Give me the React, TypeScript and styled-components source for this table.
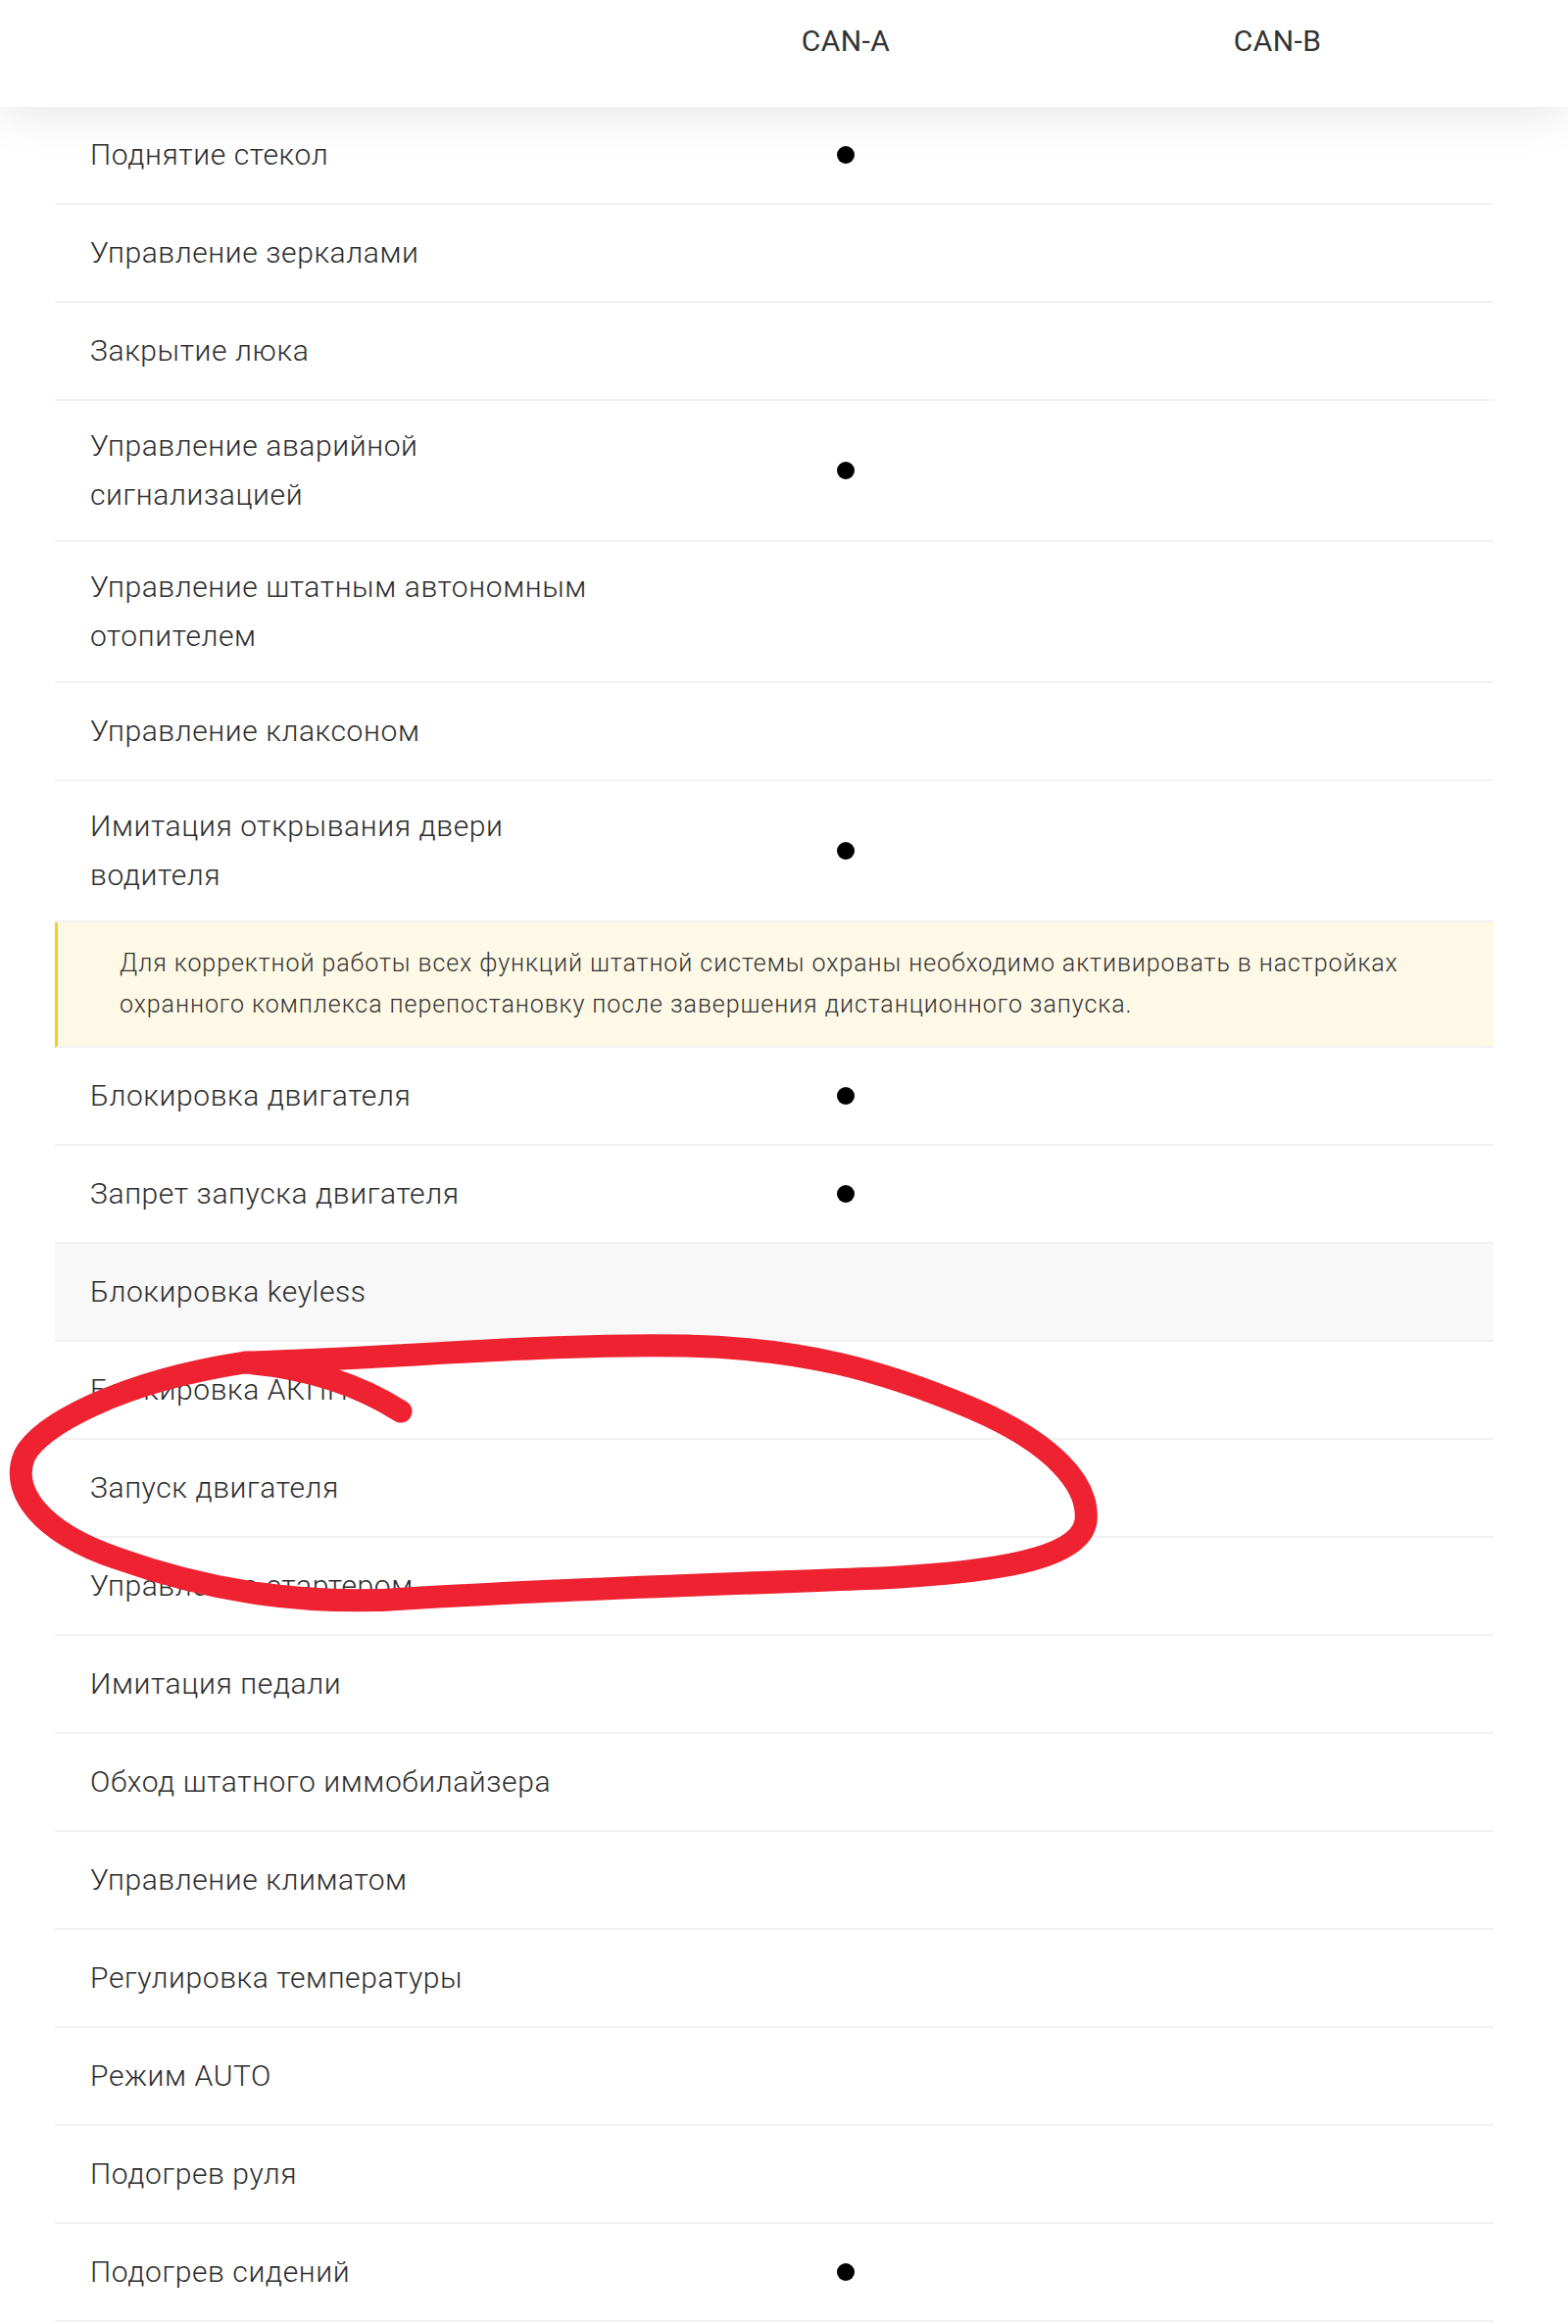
import React from "react";
import styled, { createGlobalStyle } from "styled-components";

const GlobalStyle = createGlobalStyle`
  html, body {
    margin: 0;
    padding: 0;
    background: #ffffff;
  }
  body {
    font-family: Roboto, "Noto Sans", "Liberation Sans", sans-serif;
    color: #363636;
    -webkit-font-smoothing: antialiased;
  }
  *, *::before, *::after { box-sizing: border-box; }
`;

const Page = styled.div`
  position: relative;
  width: 1600px;
  min-height: 2371px;
  overflow: hidden;
  background: #ffffff;
`;

const Header = styled.header`
  position: relative;
  z-index: 2;
  height: 109px;
  background: #ffffff;
  box-shadow: 0 6px 50px rgba(0, 0, 0, 0.1);
  padding: 0 76px 0 56px;
`;

const Grid = styled.div`
  display: grid;
  grid-template-columns: 587px 440px 1fr;
  align-items: center;
`;

const HeaderGrid = styled(Grid)`
  height: 82px;
`;

const ColTitle = styled.div`
  text-align: center;
  font-size: 30px;
  font-weight: 400;
  color: #333333;
  letter-spacing: 0.4px;
`;

const Table = styled.div`
  position: relative;
  z-index: 1;
  padding: 0 76px 0 56px;
`;

const Row = styled(Grid)<{ $shaded?: boolean }>`
  min-height: 100px;
  border-bottom: 2px solid #f1f1f1;
  background: ${(p) => (p.$shaded ? "#f8f8f8" : "transparent")};
`;

const Label = styled.div`
  padding: 21px 0 21px 36px;
  font-size: 30px;
  line-height: 50px;
  font-weight: 300;
  letter-spacing: 0.6px;
  color: #2e2e2e;
`;

const Cell = styled.div`
  display: flex;
  justify-content: center;
  align-items: center;
`;

const Dot = styled.span`
  display: block;
  width: 18px;
  height: 18px;
  border-radius: 50%;
  background: #000000;
`;

const Note = styled.div`
  background: #fef9e6;
  border-left: 3px solid #efce2a;
  border-bottom: 2px solid #f1f1f1;
  padding: 21px 30px 21px 63px;
  font-size: 25px;
  line-height: 42px;
  font-weight: 300;
  letter-spacing: 0.93px;
  color: #333333;
`;

const Scribble = styled.svg`
  position: absolute;
  left: 0;
  top: 0;
  width: 1600px;
  height: 2371px;
  pointer-events: none;
  z-index: 3;
`;

type Item = { label: React.ReactNode; a?: boolean; shaded?: boolean };

const before: Item[] = [
  { label: "Поднятие стекол", a: true },
  { label: "Управление зеркалами" },
  { label: "Закрытие люка" },
  { label: <>Управление аварийной<br />сигнализацией</>, a: true },
  { label: <>Управление штатным автономным<br />отопителем</> },
  { label: "Управление клаксоном" },
  { label: <>Имитация открывания двери<br />водителя</>, a: true },
];

const after: Item[] = [
  { label: "Блокировка двигателя", a: true },
  { label: "Запрет запуска двигателя", a: true },
  { label: "Блокировка keyless", shaded: true },
  { label: "Блокировка АКПП" },
  { label: "Запуск двигателя" },
  { label: "Управление стартером" },
  { label: "Имитация педали" },
  { label: "Обход штатного иммобилайзера" },
  { label: "Управление климатом" },
  { label: "Регулировка температуры" },
  { label: "Режим AUTO" },
  { label: "Подогрев руля" },
  { label: "Подогрев сидений", a: true },
];

const TableRow: React.FC<{ item: Item }> = ({ item }) => (
  <Row $shaded={item.shaded}>
    <Label>{item.label}</Label>
    <Cell>{item.a ? <Dot /> : null}</Cell>
    <Cell />
  </Row>
);

export default function App() {
  return (
    <Page>
      <GlobalStyle />
      <Header>
        <HeaderGrid>
          <div />
          <ColTitle>CAN-A</ColTitle>
          <ColTitle>CAN-B</ColTitle>
        </HeaderGrid>
      </Header>
      <Table>
        {before.map((it, i) => (
          <TableRow key={"b" + i} item={it} />
        ))}
        <Note>
          Для корректной работы всех функций штатной системы охраны необходимо активировать в настройках
          <br />
          охранного комплекса перепостановку после завершения дистанционного запуска.
        </Note>
        {after.map((it, i) => (
          <TableRow key={"a" + i} item={it} />
        ))}
      </Table>
      <Scribble viewBox="0 0 1600 2371">
        <path
          d="M 250 1390
             C 400 1386, 560 1370, 700 1373
             C 820 1376, 900 1398, 990 1436
             C 1075 1472, 1112 1515, 1108 1552
             C 1102 1592, 1010 1604, 900 1610
             C 740 1616, 560 1622, 430 1630
             C 310 1640, 210 1622, 120 1590
             C 40 1563, 10 1520, 25 1485
             C 40 1455, 120 1410, 250 1390
             C 320 1396, 370 1415, 409 1440"
          fill="none"
          stroke="#ee2230"
          strokeWidth={23}
          strokeLinecap="round"
          strokeLinejoin="round"
        />
      </Scribble>
    </Page>
  );
}
